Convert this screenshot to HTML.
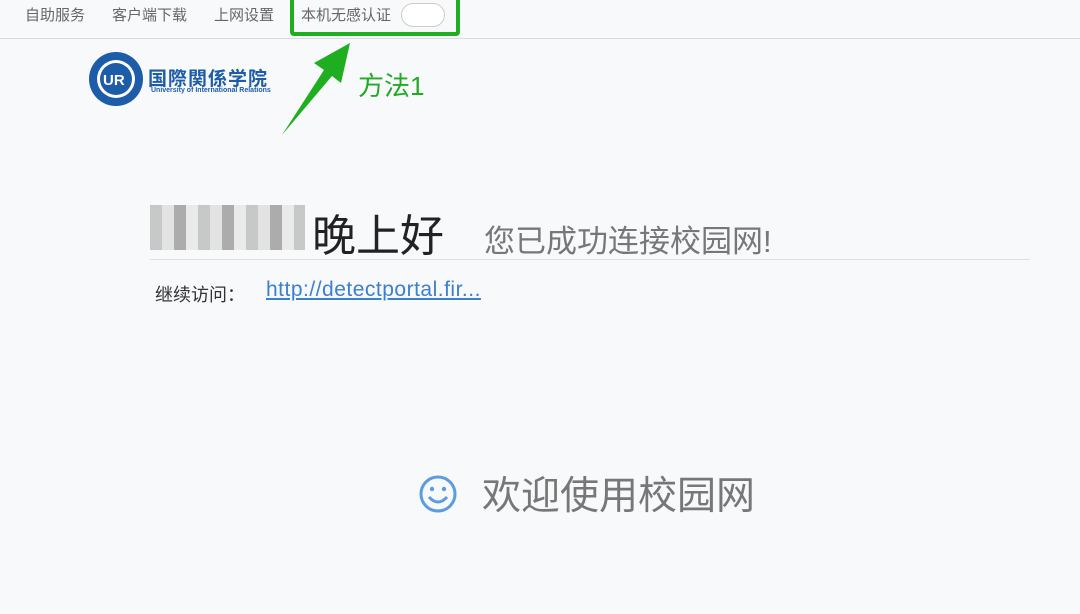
<!DOCTYPE html><html><head><meta charset="utf-8"><style>
body{margin:0;width:1080px;height:614px;background:#f7f9fb;font-family:"Liberation Sans","Noto Sans CJK SC",sans-serif;position:relative;overflow:hidden}
.a{position:absolute;white-space:nowrap}
.nav{font-size:15px;color:#666;top:4px}
</style></head><body>
<div class="a" style="left:0;top:38px;width:1080px;height:1px;background:#d6dde6"></div>
<div class="a nav" style="left:25px">自助服务</div>
<div class="a nav" style="left:112px">客户端下载</div>
<div class="a nav" style="left:214px">上网设置</div>
<div class="a nav" style="left:301px">本机无感认证</div>
<div class="a" style="left:401px;top:3px;width:42px;height:22px;border:1px solid #ccc;border-radius:12px;background:#fff"></div>
<div class="a" style="left:290px;top:-4px;width:162px;height:32px;border:4px solid #1fae1f;border-radius:4px"></div>
<svg class="a" style="left:0;top:0" width="1080" height="614"><polygon points="282,135 324,70 314,63 350,43 341,83 332,76" fill="#1fae1f"/>
<circle cx="438" cy="494" r="17" fill="none" stroke="#5b9be0" stroke-width="3"/><circle cx="432" cy="489" r="2.2" fill="#5b9be0"/><circle cx="444" cy="489" r="2.2" fill="#5b9be0"/><path d="M429 497 Q438 507 447 497" fill="none" stroke="#5b9be0" stroke-width="3"/>
<circle cx="116" cy="79" r="27" fill="#1d5ca8"/><circle cx="116" cy="79" r="19" fill="#fff"/><circle cx="116" cy="79" r="16" fill="#1d5ca8"/>
<text x="103" y="85" font-size="15" font-weight="bold" fill="#fff" font-family="Liberation Sans">UR</text></svg>
<div class="a" style="left:148px;top:64px;font-size:19px;font-weight:bold;color:#1d5ca8;letter-spacing:1px">国際関係学院</div>
<div class="a" style="left:151px;top:87px;font-size:7px;font-weight:bold;color:#1d5ca8">University of International Relations</div>
<div class="a" style="left:358px;top:66px;font-size:26px;color:#22aa22">方法1</div>
<div class="a" style="left:150px;top:205px;width:155px;height:45px;background:repeating-linear-gradient(90deg,#bbb 0 12px,#ddd 12px 24px,#999 24px 36px,#e6e6e6 36px 48px);opacity:.8"></div>
<div class="a" style="left:312px;top:200px;font-size:44px;color:#222">晚上好</div>
<div class="a" style="left:484px;top:216px;font-size:31px;color:#777">您已成功连接校园网!</div>
<div class="a" style="left:150px;top:259px;width:880px;height:1px;background:#d9e0e8"></div>
<div class="a" style="left:155px;top:281px;font-size:18px;color:#333">继续访问：</div>
<div class="a" style="left:266px;top:278px;font-size:21px;letter-spacing:0.5px;color:#3b7fd0;text-decoration:underline">http://detectportal.fir...</div>
<div class="a" style="left:482px;top:465px;font-size:39px;color:#777">欢迎使用校园网</div>
</body></html>
